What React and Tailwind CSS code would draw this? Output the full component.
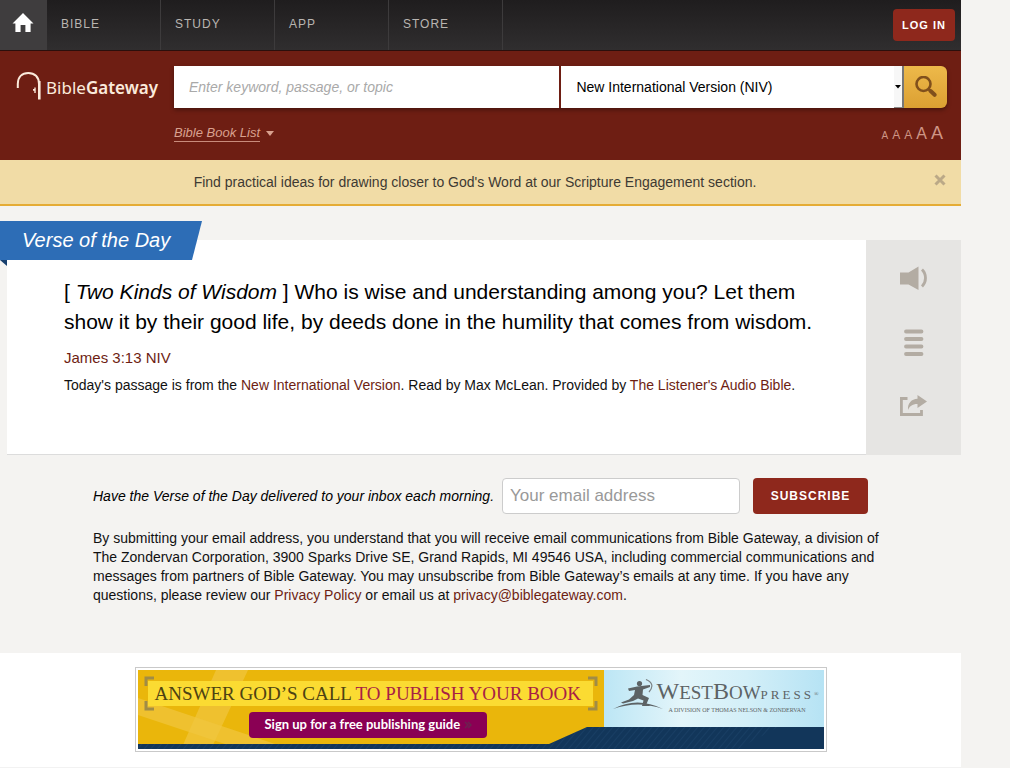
import React from "react";

const navItems = ["BIBLE", "STUDY", "APP", "STORE"];

function HomeIcon() {
  return (
    <svg viewBox="0 0 22 20" className="h-5 w-[22px] fill-white" aria-hidden="true">
      <path d="M11 0 21.5 10.5H18.6V19H13.4V12H8.6V19H3.4V10.5H.5Z" />
    </svg>
  );
}

function TopNav() {
  return (
    <nav className="flex h-[51px] items-stretch border-b border-[#2b0f0c] bg-linear-to-b from-[#1f1d1e] to-[#302e2f]">
      <a href="#home" aria-label="Home" className="flex w-[47px] items-center justify-center bg-[#3f3d3e] pr-[2px] pb-1">
        <HomeIcon />
      </a>
      {navItems.map((item) => (
        <a
          key={item}
          href={"#" + item.toLowerCase()}
          className="flex w-[114px] items-center border-r border-[#3d3b3c] pb-[3px] pl-[14px] text-xs tracking-[1px] text-[#b9b5b1]"
        >
          {item}
        </a>
      ))}
      <div className="ml-auto flex items-center pr-[6px]">
        <button type="button" className="h-8 w-[62px] rounded bg-[#8e281c] text-[11px] font-bold tracking-[1px] text-white">
          LOG IN
        </button>
      </div>
    </nav>
  );
}

function Logo() {
  return (
    <a href="#home" className="flex w-[157px] shrink-0 items-center pl-4 text-[#fbeadb]">
      <svg viewBox="0 0 26 30" className="h-[30px] w-[26px] shrink-0" aria-hidden="true">
        <path d="M1.8 17V13C1.8 6 6 1.9 12.3 1.9S23 6 23 13" fill="none" stroke="currentColor" strokeWidth="2" />
        <path d="M23.300 10V28.500" stroke="currentColor" strokeWidth="2.600" />
        <path d="M18.300 16.500h1.400v5.500h-1.400v-2.300h-1.300v-1.600h1.300Z" fill="currentColor" />
      </svg>
      <span className="ml-1 pt-[3px] text-[17px] leading-6 [font-family:'Noto_Sans','Open_Sans',sans-serif]">
        Bible<b className="font-semibold">Gateway</b>
      </span>
    </a>
  );
}

function SearchHeader() {
  return (
    <header className="flex h-[109px] items-start bg-[#6e1e13] pt-[15px] pr-[14px]">
      <div className="pt-[5px]">
        <Logo />
      </div>
      <div className="ml-[17px] min-w-0 flex-1">
        <form className="flex h-[42px] rounded-r-md shadow-[0_2px_4px_rgba(0,0,0,0.35)]">
          <div className="mr-[2px] min-w-0 flex-9">
            <input
              aria-label="Search"
              placeholder="Enter keyword, passage, or topic"
              className="h-full w-full bg-white pl-[15px] text-sm italic placeholder:text-[#a9a9a9] outline-none"
            />
          </div>
          <div className="relative min-w-0 flex-8">
            <select aria-label="Translation" className="h-full w-full appearance-none bg-white pl-[15px] text-sm text-black outline-none">
              <option>New International Version (NIV)</option>
            </select>
            <span className="pointer-events-none absolute inset-y-0 right-0 flex w-[10px] items-center justify-center border-r-2 border-b border-r-[#777] border-b-[#888] bg-[#f7f7f7]">
              <svg viewBox="0 0 6 4" className="h-1 w-[6px]" aria-hidden="true">
                <path d="M0 0H6L3 3.500Z" />
              </svg>
            </span>
          </div>
          <button
            type="submit"
            aria-label="Submit search"
            className="flex w-[43px] shrink-0 items-center justify-center rounded-r-md bg-linear-to-b from-[#edb94a] to-[#dca032]"
          >
            <svg viewBox="0 0 22 22" className="h-[22px] w-[22px]" fill="none" stroke="#80501c" aria-hidden="true">
              <circle cx="8.500" cy="8" r="7" strokeWidth="2.600" />
              <path d="m13.500 13 2 2" strokeWidth="2.600" />
              <path d="m15.600 15 4 3.800" strokeWidth="4" strokeLinecap="round" />
            </svg>
          </button>
        </form>
        <div className="flex items-center justify-between pt-[11px] pr-1">
          <a href="#books" className="flex items-center gap-[6px] text-[13px] leading-4 text-[#d9a18f] italic">
            <span className="border-b border-[#c98c7c]">Bible Book List</span>
            <svg viewBox="0 0 8 5" className="h-[5px] w-2 fill-current" aria-hidden="true">
              <path d="M0 0H8L4 5Z" />
            </svg>
          </a>
          <div className="flex items-baseline gap-1 text-[#cf9686]">
            <button type="button" className="text-[10px]">A</button>
            <button type="button" className="text-xs">A</button>
            <button type="button" className="text-xs">A</button>
            <button type="button" className="text-base">A</button>
            <button type="button" className="text-lg">A</button>
          </div>
        </div>
      </div>
    </header>
  );
}

function Notice() {
  return (
    <div className="flex h-[46px] items-center border-b-2 border-[#e5ac35] bg-[#f1dca6] pr-[15px]">
      <p className="flex-1 pl-4 text-center text-sm text-[#3e3a33]">
        Find practical ideas for drawing closer to God&apos;s Word at our Scripture Engagement section.
      </p>
      <button type="button" aria-label="Close" className="pb-1">
        <svg viewBox="0 0 12 12" className="h-3 w-3" stroke="#bba987" strokeWidth="3" aria-hidden="true">
          <path d="m1.500 1.500 9 9M10.500 1.500l-9 9" />
        </svg>
      </button>
    </div>
  );
}

const link = "text-[#6e1e13]";

function VerseOfTheDay() {
  return (
    <section className="relative pt-[34px]">
      <div className="absolute top-[15px] left-0">
        <h2 className="h-[39px] w-[202px] bg-[#2d6db6] pl-[22px] text-xl leading-[39px] text-white italic [clip-path:polygon(0_0,100%_0,calc(100%-10px)_100%,0_100%)]">
          Verse of the Day
        </h2>
        <svg viewBox="0 0 7 6" className="h-[6px] w-[7px] fill-[#173f6e]" aria-hidden="true">
          <path d="M0 0H7V6Z" />
        </svg>
      </div>
      <div className="flex min-h-[215px]">
        <div className="ml-[7px] flex-1 border-b border-[#dcdcdc] bg-white pr-10 pl-[57px]">
          <p className="pt-[37px] text-[21px] leading-[30px] text-black">
            [ <i>Two Kinds of Wisdom</i> ] Who is wise and understanding among you? Let them show it by their good life, by
            deeds done in the humility that comes from wisdom.
          </p>
          <p className="pt-[11px] text-[15px] leading-5">
            <a href="#verse" className={link}>James 3:13 NIV</a>
          </p>
          <p className="pt-[7px] text-sm leading-5 text-[#111]">
            Today&apos;s passage is from the <a href="#niv" className={link}>New International Version</a>. Read by Max McLean.
            Provided by <a href="#audio" className={link}>The Listener&apos;s Audio Bible</a>.
          </p>
        </div>
        <div className="flex w-[95px] shrink-0 flex-col items-center gap-9 bg-[#e6e5e3] pt-[25px] text-[#b3aca3]">
          <button type="button" aria-label="Listen">
            <svg viewBox="0 0 28 28" className="h-7 w-7" aria-hidden="true">
              <path d="M0 7.500H8.500L18.500 1.500V25L8.500 19.500H0Z" fill="currentColor" />
              <path d="M22 4.500Q25.500 8 25.500 13T22 21.500" fill="none" stroke="currentColor" strokeWidth="2.800" />
            </svg>
          </button>
          <button type="button" aria-label="Read chapter">
            <svg viewBox="0 0 28 28" className="h-7 w-7" stroke="currentColor" strokeWidth="3.800" strokeLinecap="round" aria-hidden="true">
              <path d="M6 2.500H21.500M6 10H21.500M6 17.500H21.500M6 25H21.500" />
            </svg>
          </button>
          <button type="button" aria-label="Share">
            <svg viewBox="0 0 28 28" className="h-7 w-7" aria-hidden="true">
              <path d="M7.500 5.500H1.400V21.500H21.500V17" fill="none" stroke="currentColor" strokeWidth="2.800" />
              <path d="M17.500 2 27 8.500 17.500 15V11C12 11 9.500 13.500 8 17C7.500 10 11.500 6 17.500 5.700Z" fill="currentColor" />
            </svg>
          </button>
        </div>
      </div>
    </section>
  );
}

function Subscribe() {
  return (
    <section className="pt-[23px] pr-[70px] pb-12 pl-[93px]">
      <form className="flex items-center pr-[23px]">
        <label htmlFor="email" className="w-[409px] shrink-0 text-sm text-black italic">
          Have the Verse of the Day delivered to your inbox each morning.
        </label>
        <input
          id="email"
          type="email"
          placeholder="Your email address"
          className="h-9 min-w-0 flex-1 rounded border border-[#ccc] bg-white pl-[7px] text-[17px] placeholder:text-[#999] outline-none"
        />
        <button type="submit" className="ml-[13px] h-9 w-[115px] shrink-0 rounded bg-[#8e281c] text-xs font-bold tracking-[1px] text-white">
          SUBSCRIBE
        </button>
      </form>
      <p className="pt-[15px] text-sm leading-[19px] text-[#111]">
        By submitting your email address, you understand that you will receive email communications from Bible Gateway, a
        division of The Zondervan Corporation, 3900 Sparks Drive SE, Grand Rapids, MI 49546 USA, including commercial
        communications and messages from partners of Bible Gateway. You may unsubscribe from Bible Gateway&rsquo;s emails at any
        time. If you have any questions, please review our <a href="#privacy" className={link}>Privacy Policy</a> or email us
        at <a href="mailto:privacy@biblegateway.com" className={link}>privacy@biblegateway.com</a>.
      </p>
    </section>
  );
}

function BannerArt() {
  return (
    <svg viewBox="0 0 686 79" preserveAspectRatio="none" className="absolute inset-0 h-full w-full" aria-hidden="true">
      <defs>
        <linearGradient id="sky">
          <stop offset="0" stopColor="#bce6f5" />
          <stop offset=".35" stopColor="#e3f5fa" />
          <stop offset=".65" stopColor="#d3eff8" />
          <stop offset="1" stopColor="#b6e3f4" />
        </linearGradient>
        <pattern id="stripes" width="5" height="5" patternUnits="userSpaceOnUse" patternTransform="rotate(40)">
          <path d="M0 0V5" stroke="#27517a" strokeWidth="1.500" />
        </pattern>
      </defs>
      <rect width="686" height="79" fill="#eab60b" />
      <path d="M78 0H110L75 75H45Z" fill="#f1c63f" opacity=".7" />
      <path d="M0 28 140 75H90L0 45Z" fill="#f1c63f" opacity=".7" />
      <rect x="466" width="220" height="58" fill="url(#sky)" />
      <path d="M0 74H411L449 57H686V79H0Z" fill="#12365a" />
      <path d="M0 74H411L449 57H640L600 79H0Z" fill="url(#stripes)" opacity=".4" />
      <path d="M16 8H8V16M8 31V39H16M450 8H458V16M458 31V39H450" fill="none" stroke="#a08c46" strokeWidth="3" />
      <rect x="10" y="11" width="445" height="25" fill="#fbdb32" />
    </svg>
  );
}

function Archer() {
  return (
    <svg viewBox="0 0 50 32" className="h-8 w-[50px] shrink-0" aria-hidden="true">
      <path d="M0 30Q24 17 50 30Q25 21 0 30Z" fill="#5d6365" />
      <circle cx="26.500" cy="4.500" r="2.600" fill="#5d6365" />
      <path d="M15 9.500 24 7.500 37 6V8L30 10.500 29.500 16 36 19 33.500 25 38 27H29L30.500 21.500 25 19.500 20 22 10 24.500 8 23.500 16 20.500 21 16 22 11 16 12Z" fill="#5d6365" />
      <path d="M33 .5Q43 5 36 13" fill="none" stroke="#7b8285" strokeWidth="1.200" />
    </svg>
  );
}

function Banner() {
  return (
    <section className="border-b-2 border-[#f2f2f2] bg-white pt-[14px] pb-[15px]">
      <a href="#publish" className="mx-auto block w-[692px] max-w-full border border-[#c9c9c9] p-[2px]">
        <div className="relative h-[79px]">
          <BannerArt />
          <div className="relative flex h-full [font-family:'Liberation_Serif',serif]">
            <div className="flex w-[466px] flex-col pt-[11px]">
              <p className="pl-[17px] text-[19px] leading-[25px] whitespace-nowrap text-[#4d4213]">
                ANSWER GOD&rsquo;S CALL <span className="text-[#a81f45]">TO PUBLISH YOUR BOOK</span>
              </p>
              <span className="mt-[6px] ml-[111px] flex h-[26px] w-[238px] items-center gap-1 rounded-sm bg-[#8a0054] pl-4 text-[13px] font-bold whitespace-nowrap text-white [font-family:Lato,sans-serif]">
                Sign up for a free publishing guide
                <svg viewBox="0 0 8 8" className="h-2 w-2" fill="none" stroke="#6b2450" strokeWidth="1.500" aria-hidden="true">
                  <path d="m1 1 3 3-3 3M4 1l3 3-3 3" />
                </svg>
              </span>
            </div>
            <div className="flex pt-[9px] pl-[9px] text-[#5d6365]">
              <Archer />
              <div className="-ml-[6px]">
                <p className="text-[19px] leading-6 whitespace-nowrap">
                  <span className="text-2xl leading-6">W</span>EST<span className="text-2xl leading-6">B</span>OW<span className="text-[13px] tracking-[3px]">PRESS</span>
                  <sup className="text-[6px]">&reg;</sup>
                </p>
                <p className="pl-3 text-[6px] leading-[7px] whitespace-nowrap">A DIVISION OF THOMAS NELSON &amp; ZONDERVAN</p>
              </div>
            </div>
          </div>
        </div>
      </a>
    </section>
  );
}

export default function App() {
  return (
    <div className="min-h-screen bg-white pr-[14px] [font-family:'Liberation_Sans',Arial,sans-serif]">
      <div className="min-h-screen bg-[#f4f3f1] pr-[49px]">
        <TopNav />
        <SearchHeader />
        <Notice />
        <main>
          <VerseOfTheDay />
          <Subscribe />
          <Banner />
        </main>
      </div>
    </div>
  );
}
